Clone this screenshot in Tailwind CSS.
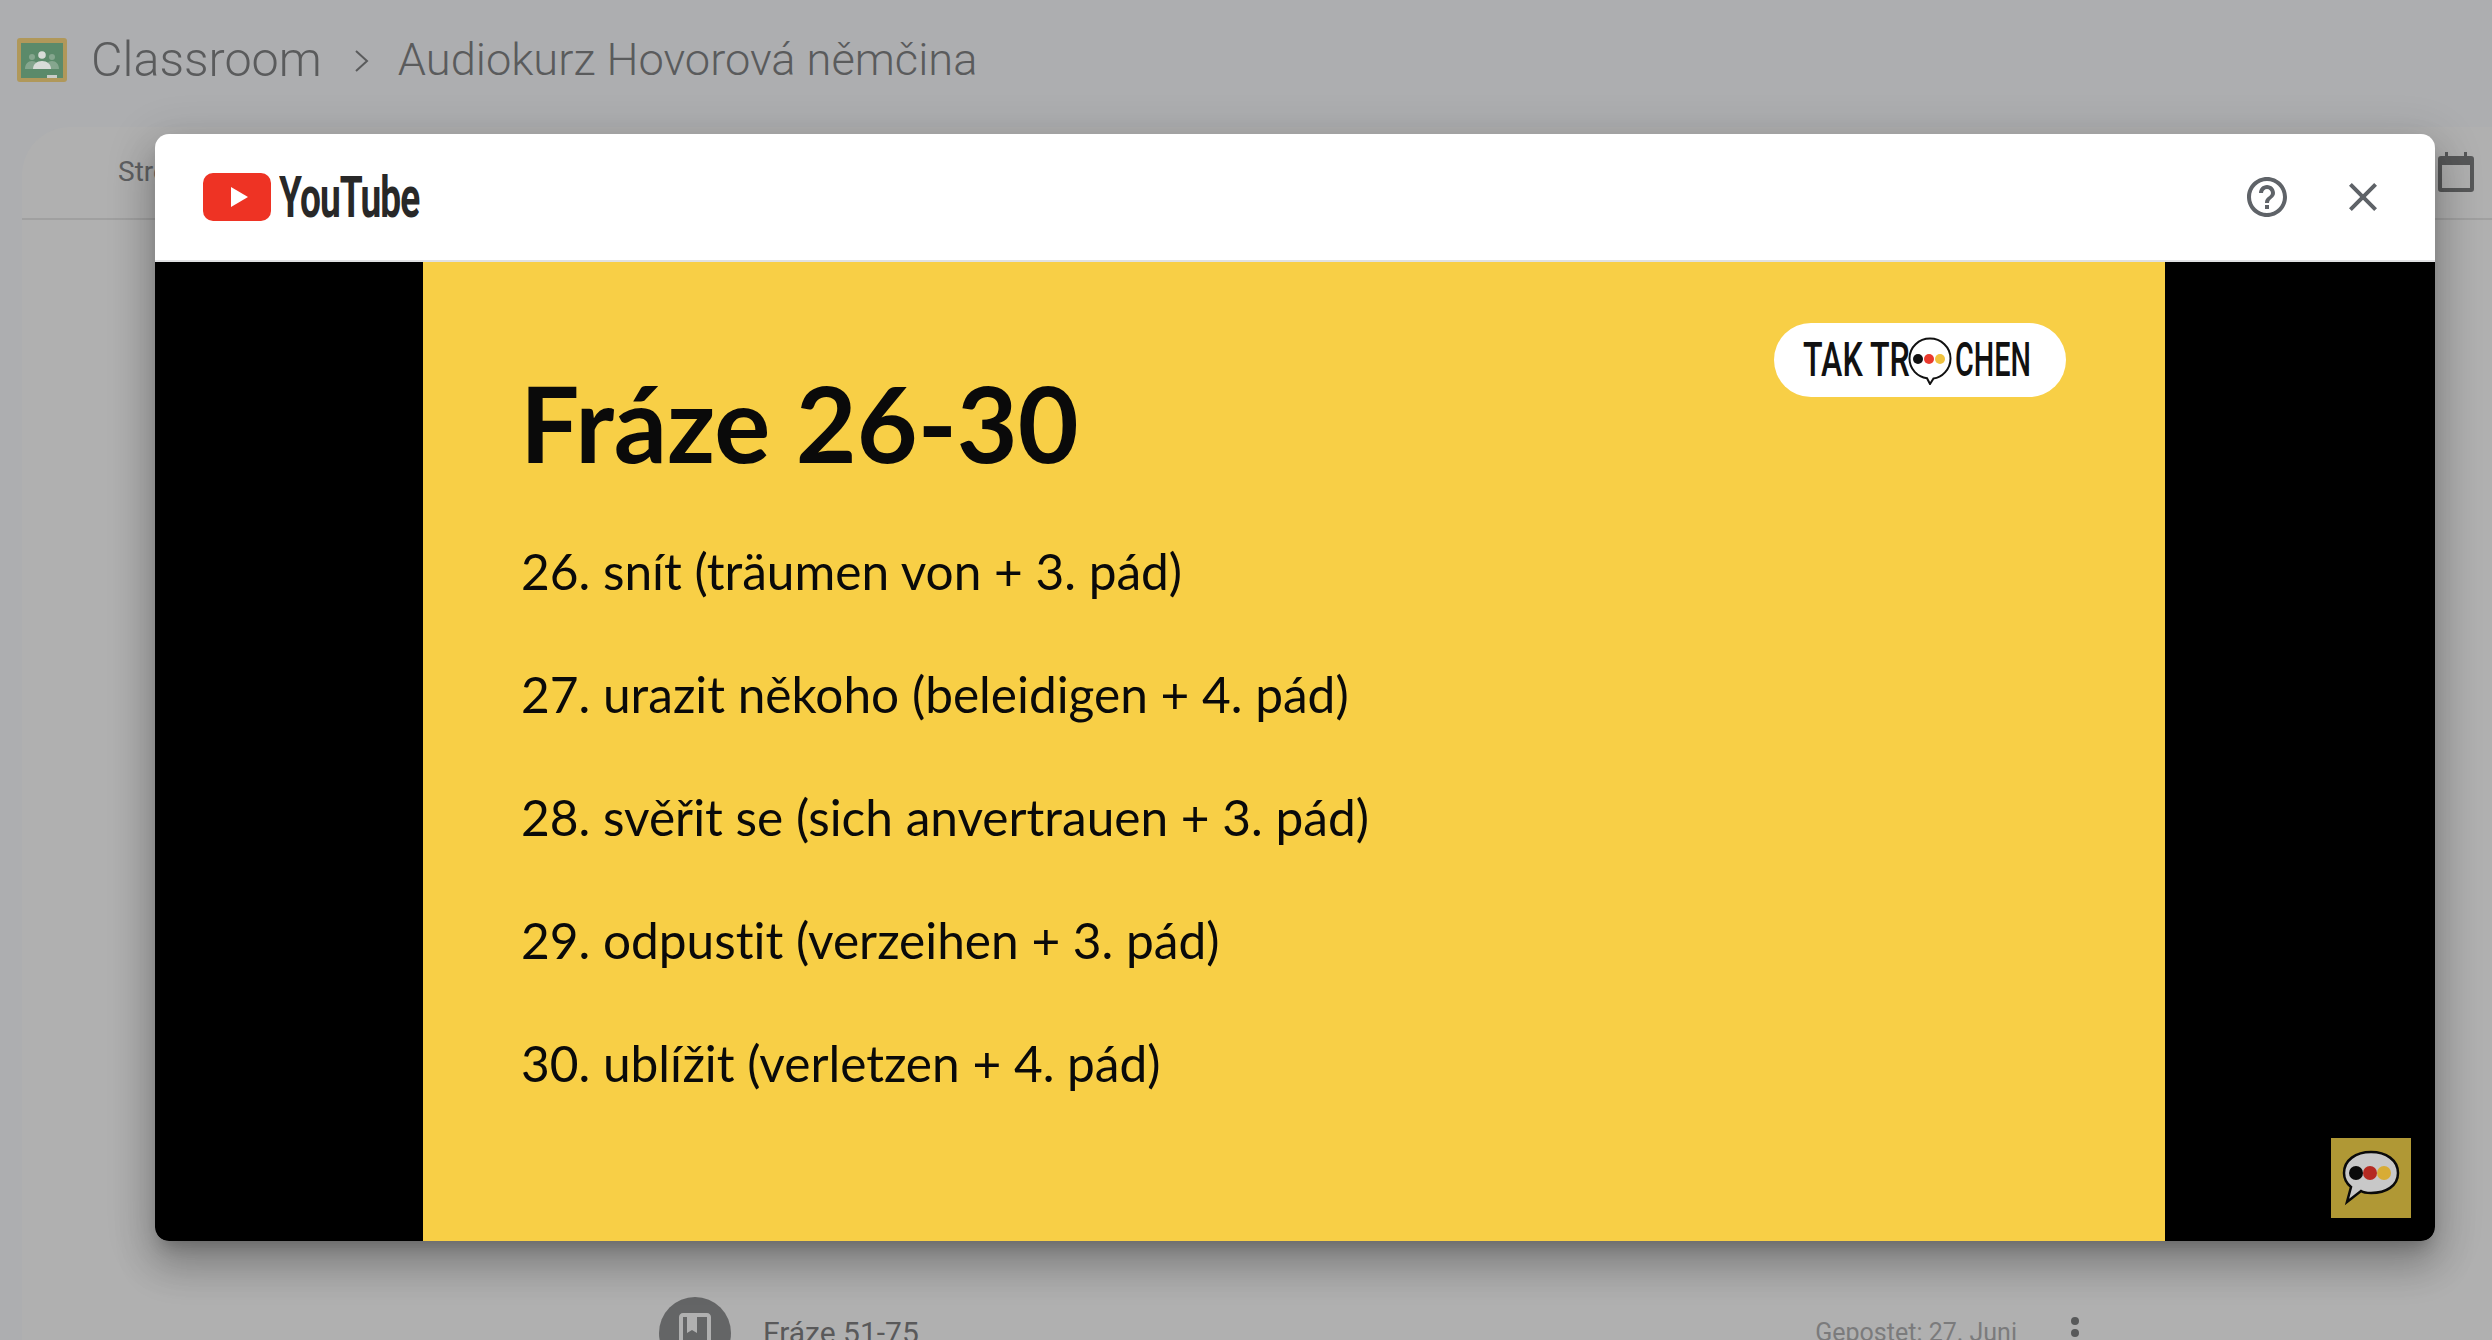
<!DOCTYPE html>
<html lang="en">
<head>
    <meta charset="UTF-8">
    <title>Audiokurz Hovorová němčina</title>
    <script src="https://cdn.jsdelivr.net/npm/@tailwindcss/browser@4"></script>
</head>
<body class="bg-[#adaeb0] font-['Roboto',sans-serif]">
    <div class="relative w-[2492px] h-[1340px] overflow-hidden">
        <!-- Classroom top bar -->
        <header class="h-[127px] flex items-start pt-[38px] pl-[17px]">
            <svg class="w-[50px] h-[44px]" viewBox="0 0 50 44">
                <rect width="50" height="44" rx="3" fill="#b0985a"/>
                <rect x="4" y="5" width="42" height="35" fill="#5b8a6a"/>
                <circle cx="15" cy="19" r="3" fill="#85a68e"/>
                <circle cx="35" cy="19" r="3" fill="#85a68e"/>
                <path d="M8 31c0-5 3-8 7-8s7 3 7 8zM28 31c0-5 3-8 7-8s7 3 7 8z" fill="#85a68e"/>
                <circle cx="25" cy="17" r="3.8" fill="#d8dcd8"/>
                <path d="M16 31c0-5 4-8 9-8s9 3 9 8z" fill="#d8dcd8"/>
                <rect x="30" y="37" width="10" height="3" fill="#c9cdc8"/>
            </svg>
            <span class="ml-[24px] text-[48.5px] leading-[44px] font-light text-[#5a5b5c]">Classroom</span>
            <svg class="ml-[33px] mt-[12px] w-[14px] h-[22px]" viewBox="0 0 14 22" fill="none" stroke="#5a5b5c" stroke-width="2"><path d="M1 1l11 10L1 21"/></svg>
            <span class="ml-[29px] text-[45.2px] leading-[44px] font-light text-[#5a5b5c]">Audiokurz Hovorová němčina</span>
        </header>

        <!-- Classroom page behind the dialog -->
        <main class="ml-[22px] h-[1213px] bg-[#b0b0b0] rounded-tl-[48px]">
            <div class="h-[93px] border-b-2 border-[#a0a0a0] flex justify-between items-start">
                <span class="ml-[96px] mt-[29px] text-[28px] leading-[32px] text-[#5f6062]">Stream</span>
                <svg class="mr-[18px] mt-[25px] w-[36px] h-[40px]" viewBox="0 0 36 40" fill="#575859">
                    <path d="M7 0h3v4h16V0h3v4h4a3 3 0 0 1 3 3v30a3 3 0 0 1-3 3H3a3 3 0 0 1-3-3V7a3 3 0 0 1 3-3h4zM4 13v23h28V13z"/>
                </svg>
            </div>
            <div class="mt-[1077px] ml-[637px] w-[1420px] flex items-start">
                <div class="w-[72px] h-[72px] rounded-full bg-[#646566] flex items-center justify-center">
                    <svg class="w-[48px] h-[48px]" viewBox="0 0 24 24" fill="#b0b0b0"><path d="M18 2H6c-1.1 0-2 .9-2 2v16c0 1.1.9 2 2 2h12c1.1 0 2-.9 2-2V4c0-1.1-.9-2-2-2zm0 18H6V4h2v8l2.5-1.5L13 12V4h5v16z"/></svg>
                </div>
                <span class="ml-[32px] mt-[21px] text-[30px] leading-[30px] text-[#59595a]">Fráze 51-75</span>
                <span class="ml-auto mt-[21px] text-[25px] leading-[30px] text-[#7b7b7c]">Gepostet: 27. Juni</span>
                <svg class="ml-[54px] mt-[20px] w-[8px] h-[32px]" viewBox="0 0 8 32" fill="#58595a"><circle cx="4" cy="4" r="4"/><circle cx="4" cy="16" r="4"/><circle cx="4" cy="28" r="4"/></svg>
            </div>
        </main>

        <!-- YouTube dialog -->
        <div class="absolute left-[155px] top-[134px] w-[2280px] h-[1107px] bg-white rounded-[14px] overflow-hidden flex flex-col shadow-[0_24px_38px_3px_rgba(0,0,0,0.2),0_9px_46px_8px_rgba(0,0,0,0.12),0_11px_15px_-7px_rgba(0,0,0,0.2)]">
            <div class="h-[128px] border-b-2 border-[#e0e1e3] flex items-center shrink-0">
                <div class="ml-[48px] flex items-center">
                    <svg class="w-[68px] h-[48px]" viewBox="0 0 68 48"><rect width="68" height="48" rx="10" fill="#ee3324"/><path d="M28 14l17 10-17 10z" fill="#fff"/></svg>
                    <span class="ml-[8px] w-[140px] text-[58px] leading-[56px] font-bold tracking-tight text-[#282828] origin-left scale-x-[0.64] whitespace-nowrap">YouTube</span>
                </div>
                <svg class="ml-auto w-[48px] h-[48px]" viewBox="0 0 24 24" fill="#5f6368"><path d="M11 18h2v-2h-2v2zm1-16C6.48 2 2 6.48 2 12s4.48 10 10 10 10-4.48 10-10S17.52 2 12 2zm0 18c-4.41 0-8-3.59-8-8s3.59-8 8-8 8 3.59 8 8-3.59 8-8 8zm0-14c-2.21 0-4 1.79-4 4h2c0-1.1.9-2 2-2s2 .9 2 2c0 2-3 1.75-3 5h2c0-2.25 3-2.5 3-5 0-2.21-1.79-4-4-4z"/></svg>
                <svg class="ml-[48px] mr-[48px] w-[48px] h-[48px]" viewBox="0 0 24 24" fill="#5f6368"><path d="M19 6.41 17.59 5 12 10.59 6.41 5 5 6.41 10.59 12 5 17.59 6.41 19 12 13.41 17.59 19 19 17.59 13.41 12z"/></svg>
            </div>
            <div class="relative flex-1 bg-black flex justify-center pr-[2px]">
                <div class="relative w-[1742px] bg-[#f8cf46] pl-[97px] pt-[97px] font-['Lato',sans-serif] text-[#0a0a0a] [font-variant-ligatures:none]">
                    <h1 class="text-[105px] leading-[127px] font-bold">Fráze 26-30</h1>
                    <ol class="mt-[54px] ml-[1px] flex flex-col gap-[61px] text-[49.6px] leading-[62px]">
                        <li>26. snít (träumen von + 3. pád)</li>
                        <li>27. urazit někoho (beleidigen + 4. pád)</li>
                        <li>28. svěřit se (sich anvertrauen + 3. pád)</li>
                        <li>29. odpustit (verzeihen + 3. pád)</li>
                        <li>30. ublížit (verletzen + 4. pád)</li>
                    </ol>
                    <div class="absolute left-[1351px] top-[61px] w-[292px] h-[74px] rounded-full bg-white flex items-center pl-[29px] font-['Roboto',sans-serif] font-medium text-[48px] text-[#111]">
                        <span class="w-[105px] shrink-0 origin-left scale-x-[0.67] whitespace-nowrap">TAK TR</span>
                        <svg class="w-[44px] h-[48px] shrink-0 mt-[2px]" viewBox="0 0 44 48">
                            <path d="M22 1.500c11 0 20.500 8.500 20.500 20 0 11-9 19.500-17 20L22 47l-3-5.800C9.500 40 1.500 32 1.500 21.500 1.500 10 11 1.500 22 1.500z" fill="#fff" stroke="#111" stroke-width="2"/>
                            <circle cx="10" cy="22" r="5" fill="#111"/><circle cx="21" cy="22" r="5" fill="#ea3a2d"/><circle cx="32" cy="22" r="5" fill="#f0c23e"/>
                        </svg>
                        <span class="ml-[3px] w-[78px] origin-left scale-x-[0.6] whitespace-nowrap">CHEN</span>
                    </div>
                </div>
                <!-- Channel watermark -->
                <div class="absolute right-[24px] bottom-[23px] w-[80px] h-[80px] bg-[#b09835] flex items-center justify-center">
                    <svg class="w-[58px] h-[56px]" viewBox="0 0 58 56">
                        <path d="M29 2c15 0 27 8 27 21S44 43 29 43c-4 0-7 0-10-2L5 52l4-15C4 33 2 28 2 23 2 10 14 2 29 2z" fill="#c8c8c8" stroke="#0a0a0a" stroke-width="2.500"/>
                        <circle cx="14" cy="23" r="7" fill="#0a0a0a"/><circle cx="28" cy="23" r="7" fill="#b52a22"/><circle cx="42" cy="23" r="7" fill="#d8ac35"/>
                    </svg>
                </div>
            </div>
        </div>
    </div>
</body>
</html>
